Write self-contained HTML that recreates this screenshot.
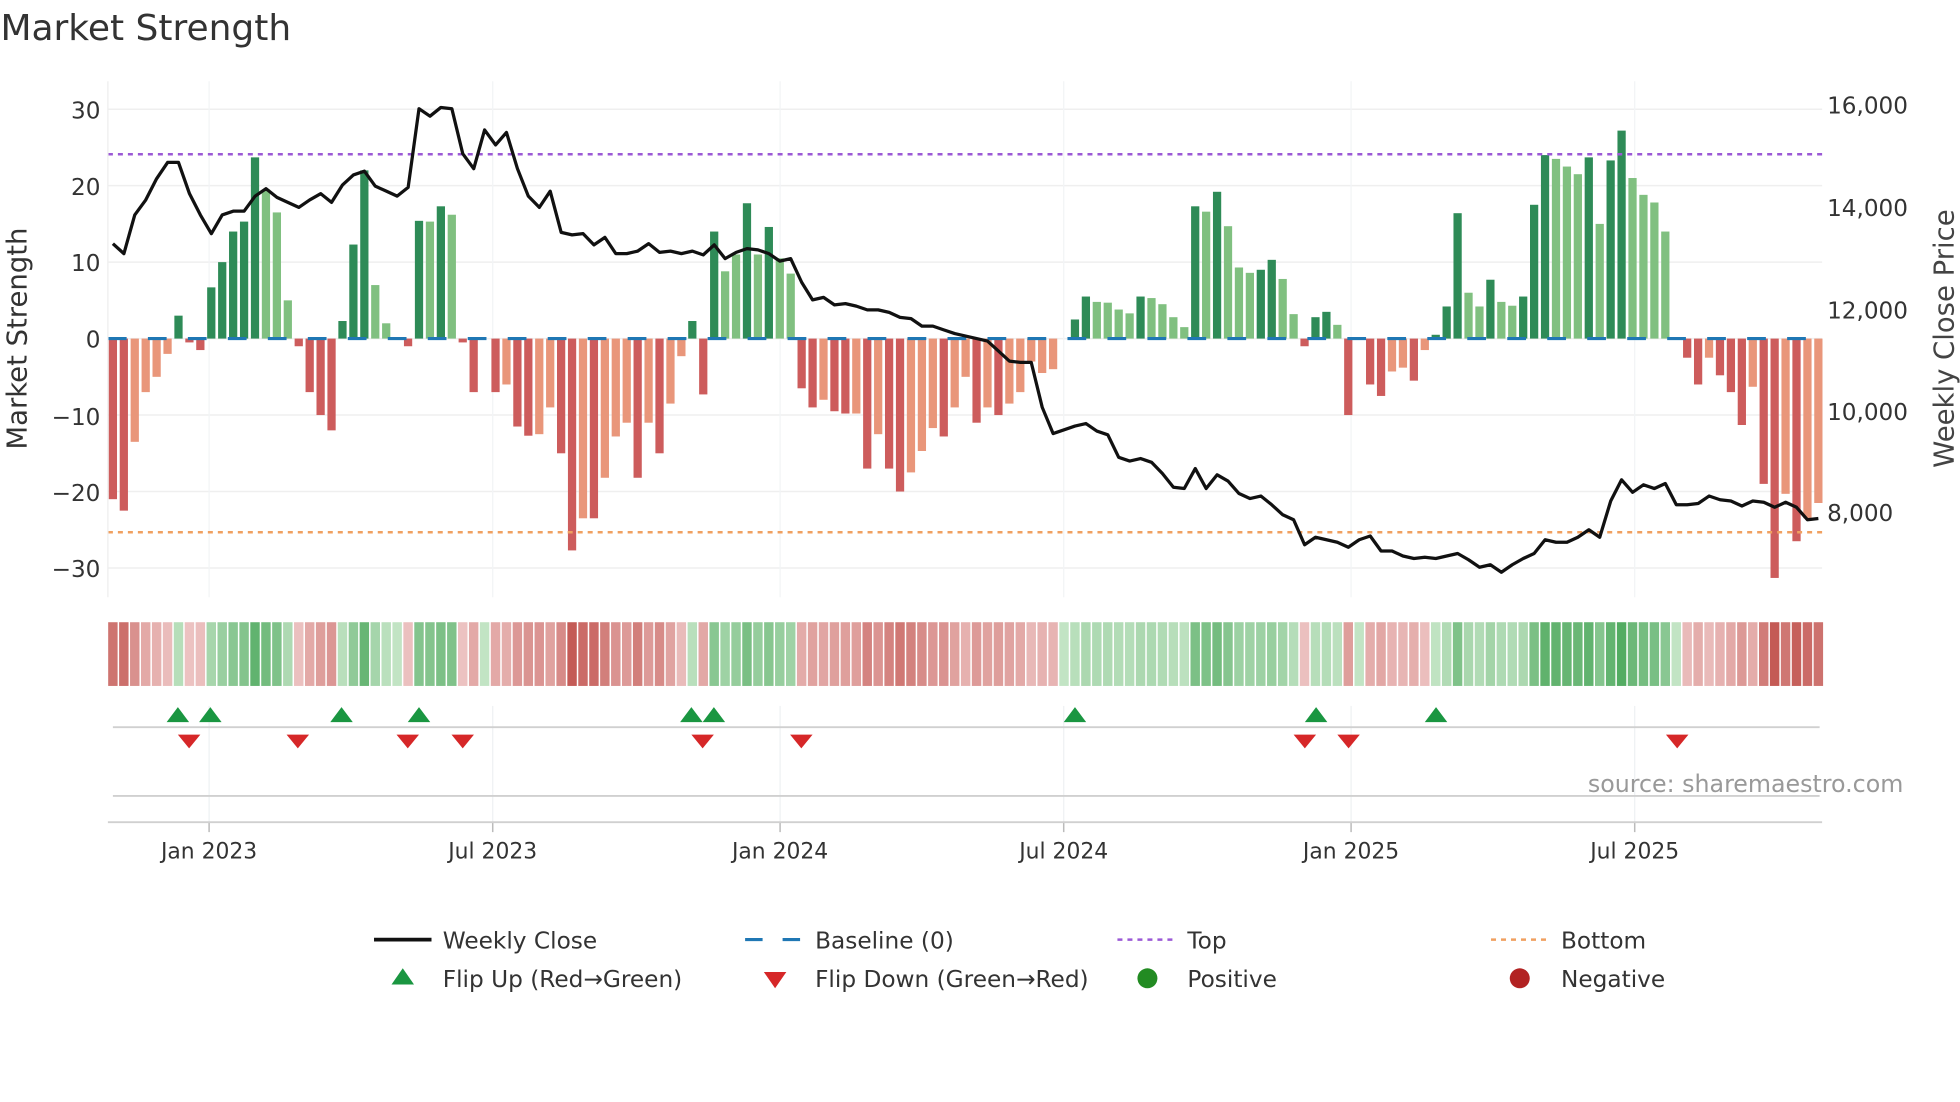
<!DOCTYPE html>
<html><head><meta charset="utf-8">
<style>
html,body{margin:0;padding:0;background:#fff;}
svg{display:block;font-family:"DejaVu Sans","Liberation Sans",sans-serif;}
</style></head>
<body>
<svg id="s" width="1960" height="1102" viewBox="0 0 1568 882" xmlns="http://www.w3.org/2000/svg">
<rect width="1568" height="882" fill="#fff"/>
<text x="0" y="32" font-size="28.8" fill="#333">Market Strength</text>
<g id="grid"></g>
<g id="bars"></g>
<line x1="86" y1="271" x2="1458" y2="271" stroke="#1f77b4" stroke-width="2.5" stroke-dasharray="15,17"/>
<line x1="86" y1="123.5" x2="1458" y2="123.5" stroke="#9b59d6" stroke-width="2" stroke-dasharray="4,4"/>
<line x1="86" y1="426" x2="1458" y2="426" stroke="#f0a060" stroke-width="2" stroke-dasharray="4,4"/>
<polyline id="price" fill="none" stroke="#111" stroke-width="2.6" stroke-linejoin="round"/>
<line x1="86" y1="65" x2="86" y2="478" stroke="#eee" stroke-width="1"/>
<g font-size="18.5" fill="#333" text-anchor="end">
<text x="80" y="95">30</text><text x="80" y="156">20</text><text x="80" y="217">10</text><text x="80" y="278">0</text>
<text x="80" y="340">−10</text><text x="80" y="401">−20</text><text x="80" y="462">−30</text>
</g>
<g font-size="18.5" fill="#333">
<text x="1462" y="91">16,000</text><text x="1462" y="173">14,000</text><text x="1462" y="255">12,000</text>
<text x="1462" y="336">10,000</text><text x="1462" y="417">8,000</text>
</g>
<text transform="translate(21,271) rotate(-90)" font-size="22" fill="#333" text-anchor="middle">Market Strength</text>
<text transform="translate(1563,271) rotate(-90)" font-size="22" fill="#444" text-anchor="middle">Weekly Close Price</text>
<g id="heat"></g>
<line x1="90" y1="582" x2="1456" y2="582" stroke="#d0d0d0" stroke-width="1.5"/>
<line x1="90" y1="637" x2="1456" y2="637" stroke="#d0d0d0" stroke-width="1.5"/>
<line x1="86" y1="658" x2="1458" y2="658" stroke="#d0d0d0" stroke-width="1.5"/>
<g id="tri"></g>
<text x="1523" y="634" font-size="19" fill="#999" text-anchor="end">source: sharemaestro.com</text>
<g id="ticks" font-size="17.5" fill="#333" text-anchor="middle"></g>
<g font-size="18.6" fill="#333">
<line x1="299" y1="752" x2="345" y2="752" stroke="#111" stroke-width="3"/>
<text x="354" y="759">Weekly Close</text>
<line x1="596" y1="752" x2="640" y2="752" stroke="#1f77b4" stroke-width="2.5" stroke-dasharray="14,16"/>
<text x="652" y="759">Baseline (0)</text>
<line x1="894" y1="752" x2="938" y2="752" stroke="#9b59d6" stroke-width="2" stroke-dasharray="4,4"/>
<text x="950" y="759">Top</text>
<line x1="1193" y1="752" x2="1237" y2="752" stroke="#f0a060" stroke-width="2" stroke-dasharray="4,4"/>
<text x="1249" y="759">Bottom</text>
<polygon points="313,788 331,788 322,775" fill="#1a9641"/>
<text x="354" y="790">Flip Up (Red→Green)</text>
<polygon points="611,778 629,778 620,791" fill="#d62728"/>
<text x="652" y="790">Flip Down (Green→Red)</text>
<circle cx="918" cy="783" r="8" fill="#228b22"/>
<text x="950" y="790">Positive</text>
<circle cx="1216" cy="783" r="8" fill="#b22222"/>
<text x="1249" y="790">Negative</text>
</g>
</svg>
<script>
var NS="http://www.w3.org/2000/svg";
function el(p,t,a){var e=document.createElementNS(NS,t);for(var k in a)e.setAttribute(k,a[k]);p.appendChild(e);return e;}
var B=[[-21,1],[-22.5,1],[-13.5,0],[-7,0],[-5,0],[-2,0],[3,1],[-0.5,1],[-1.5,1],[6.7,1],[10,1],[14,1],[15.3,1],[23.7,1],[19.5,0],[16.5,0],[5,0],[-1,1],[-7,1],[-10,1],[-12,1],[2.3,1],[12.3,1],[22,1],[7,0],[2,0],[0,0],[-1,1],[15.4,1],[15.3,0],[17.3,1],[16.2,0],[-0.5,1],[-7,1],[0,0],[-7,1],[-6,0],[-11.5,1],[-12.7,1],[-12.5,0],[-9,0],[-15,1],[-27.7,1],[-23.5,0],[-23.5,1],[-18.2,0],[-12.8,0],[-11,0],[-18.2,1],[-11,0],[-15,1],[-8.5,0],[-2.3,0],[2.3,1],[-7.3,1],[14,1],[8.8,0],[11,0],[17.7,1],[11,0],[14.6,1],[10.5,0],[8.5,0],[-6.5,1],[-9,1],[-8,0],[-9.5,1],[-9.8,1],[-9.8,0],[-17,1],[-12.5,0],[-17,1],[-20,1],[-17.5,0],[-14.7,0],[-11.7,0],[-12.8,1],[-9,0],[-5,0],[-11,1],[-9,0],[-10,1],[-8.5,0],[-7,0],[-3,0],[-4.5,0],[-4,0],[0,0],[2.5,1],[5.5,1],[4.8,0],[4.7,0],[3.8,0],[3.3,0],[5.5,1],[5.3,0],[4.5,0],[2.8,0],[1.5,0],[17.3,1],[16.6,0],[19.2,1],[14.7,0],[9.3,0],[8.6,0],[9,1],[10.3,1],[7.8,0],[3.2,0],[-1,1],[2.8,1],[3.5,1],[1.8,0],[-10,1],[0,0],[-6,1],[-7.5,1],[-4.3,0],[-3.8,0],[-5.5,1],[-1.5,0],[0.5,1],[4.2,1],[16.4,1],[6,0],[4.2,0],[7.7,1],[4.8,0],[4.3,0],[5.5,1],[17.5,1],[24,1],[23.5,0],[22.5,0],[21.5,0],[23.7,1],[15,0],[23.3,1],[27.2,1],[21,0],[18.8,0],[17.8,0],[14,0],[0,0],[-2.5,1],[-6,1],[-2.5,0],[-4.8,1],[-7,1],[-11.3,1],[-6.3,0],[-19,1],[-31.3,1],[-20.3,0],[-26.5,1],[-23.5,0],[-21.5,0]];
var P=[195,203,172,160,143,130,130,155,172,187,172,169,169,157,151,158,162,166,160,155,162,148,140,137,149,153,157,150,87,93,86,87,123,135,104,116,106,135,157,166,153,186,188,187,196,190,203,203,201,195,202,201,203,201,204,196,207,202,199,200,203,209,207,226,240,238,244,243,245,248,248,250,254,255,261,261,264,267,269,271,273,281,289,290,290,326,347,344,341,339,345,348,366,369,367,370,379,390,391,375,391,380,385,395,399,397,404,412,416,436,430,432,434,438,432,429,441,441,445,447,446,447,445,443,448,454,452,458,452,447,443,432,434,434,430,424,430,401,384,394,388,391,387,404,404,403,397,400,401,405,401,402,406,402,406,416,415];
var n=B.length, x0=90, x1=1455, dx=(x1-x0)/(n-1);
var g=document.getElementById('grid');
[30,20,10,0,-10,-20,-30].forEach(function(v){var y=271-v*6.12;el(g,'line',{x1:86,x2:1458,y1:y,y2:y,stroke:'#efefef','stroke-width':1.2});});
var T=[[167,'Jan 2023'],[394,'Jul 2023'],[624,'Jan 2024'],[851,'Jul 2024'],[1081,'Jan 2025'],[1308,'Jul 2025']];
var tk=document.getElementById('ticks');
T.forEach(function(t){el(g,'line',{x1:t[0],x2:t[0],y1:65,y2:478,stroke:'#f2f4f6','stroke-width':1});
el(g,'line',{x1:t[0],x2:t[0],y1:565,y2:658,stroke:'#eef1f3','stroke-width':1});
el(g,'line',{x1:t[0],x2:t[0],y1:658,y2:666,stroke:'#bbb','stroke-width':1.2});
var tx=el(tk,'text',{x:t[0],y:687});tx.textContent=t[1];});
var bg=document.getElementById('bars'), hg=document.getElementById('heat');
function mix(a,b,t){return 'rgb('+[0,1,2].map(function(i){return Math.round(a[i]+(b[i]-a[i])*t);}).join(',')+')';}
for(var i=0;i<n;i++){var v=B[i][0],d=B[i][1],x=x0+i*dx;
 var c=v>=0?(d?'#2e8b57':'#80c080'):(d?'#cd5c5c':'#e9967a');
 if(v!==0){var y=271-v*6.12;el(bg,'rect',{x:x-3.3,width:6.6,y:Math.min(y,271),height:Math.abs(271-y),fill:c});}
 var t=Math.min(1,Math.abs(v)/28)*0.85+0.15;
 var hc=v>=0?mix([214,238,214],[80,170,95],t):mix([244,214,214],[196,90,85],t);
 el(hg,'rect',{x:x-dx/2+0.6,width:dx-1.2,y:498,height:51,fill:hc});
}
var pts=[];for(var i=0;i<P.length;i++)pts.push((x0+i*dx).toFixed(1)+','+P[i]);
document.getElementById('price').setAttribute('points',pts.join(' '));
var tr=document.getElementById('tri');
[142,168,273,335,553,571,860,1053,1149].forEach(function(x){el(tr,'polygon',{points:(x-9)+',578 '+(x+9)+',578 '+x+',566',fill:'#1a9641'});});
[151,238,326,370,562,641,1044,1079,1342].forEach(function(x){el(tr,'polygon',{points:(x-9)+',588 '+(x+9)+',588 '+x+',599',fill:'#d62728'});});
</script>
</body></html>
